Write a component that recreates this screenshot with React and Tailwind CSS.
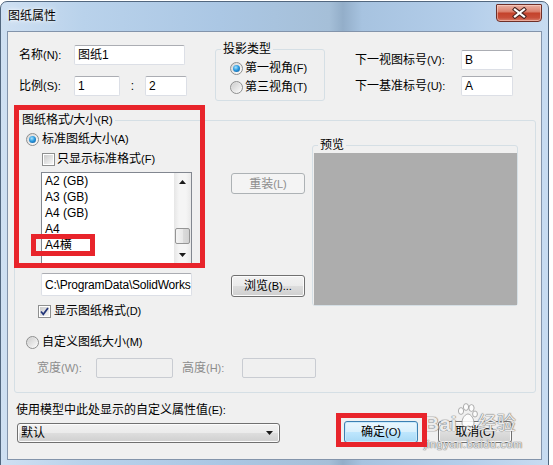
import React from 'react';

const M = ({ children }) => <span className="text-[11px]">{children}</span>;

function Radio({ on }) {
  return (
    <span className="flex items-center justify-center w-[13px] h-[13px] shrink-0 rounded-full border border-[#8e8f8f] bg-[linear-gradient(135deg,#d5d5d5,#fefefe)]">
      {on ? (
        <span className="w-[7px] h-[7px] rounded-full bg-[radial-gradient(circle_at_40%_35%,#a9e2fb_0%,#2a9ae0_45%,#0f4f8e_100%)]" />
      ) : (
        <span className="w-[9px] h-[9px] rounded-full bg-[linear-gradient(135deg,#cfcfcf,#f8f8f8)]" />
      )}
    </span>
  );
}

function Check({ on }) {
  return (
    <span className="flex items-center justify-center w-[13px] h-[13px] shrink-0 border border-[#8e8f8f] bg-white">
      <span className="relative flex items-center justify-center w-[9px] h-[9px] bg-[linear-gradient(135deg,#cbcbcb,#f7f7f7)]">
        {on && (
          <svg width="11" height="11" viewBox="0 0 11 11" className="absolute -left-[1px] -top-[1px]">
            <path d="M2 5.5 L4.3 8.3 L9 2" fill="none" stroke="#23367a" strokeWidth="1.7" />
          </svg>
        )}
      </span>
    </span>
  );
}

function Input({ className = '', children }) {
  return (
    <div className={`flex items-center shrink-0 bg-white border border-[#dcdfe6] border-t-[#abadb3] rounded-[2px] pl-[3px] overflow-hidden whitespace-nowrap ${className}`}>
      {children}
    </div>
  );
}

function Btn({ kind = 'normal', className = '', children }) {
  const styles = {
    normal:
      'border-[#707070] bg-[linear-gradient(180deg,#f2f2f2_0%,#ebebeb_48%,#dddddd_52%,#cfcfcf_100%)] shadow-[inset_0_0_0_1px_#fcfcfc] text-black',
    disabled: 'border-[#adb2b5] bg-[#f4f4f4] text-[#8d8d8d]',
    def: 'border-[#3c7fb1] bg-[linear-gradient(180deg,#eaf6fd_0%,#d9f0fc_48%,#bee6fd_52%,#a7d9f5_100%)] shadow-[inset_0_0_0_1px_#c8eafc] text-black',
  };
  return (
    <div className={`flex items-center justify-center w-[74px] shrink-0 rounded-[3px] border ${styles[kind]} ${className}`}>
      {children}
    </div>
  );
}

function Tri({ down }) {
  return (
    <svg width="7" height="4" viewBox="0 0 7 4">
      {down ? <polygon points="0,0 7,0 3.5,4" fill="#1a1a1a" /> : <polygon points="0,4 7,4 3.5,0" fill="#1a1a1a" />}
    </svg>
  );
}

export default function App() {
  const items = ['A2 (GB)', 'A3 (GB)', 'A4 (GB)', 'A4', 'A4横'];
  return (
    <div className="relative w-[553px] h-[465px] overflow-hidden bg-white text-[12px] leading-[14px] text-black font-[family-name:'Liberation_Sans','Noto_Sans_CJK_SC',sans-serif]">
      {/* window */}
      <div className="mt-[1px] w-[549px] h-[470px] rounded-t-[7px] border border-[#52677f] bg-[linear-gradient(90deg,#cfe0f2_0%,#b9d2eb_15%,#abc7e4_40%,#a5bfd8_60%,#93aec9_62.5%,#a7c3e0_66%,#b4ceea_85%,#c8dcf1_100%)] flex flex-col">
        {/* title bar */}
        <div className="h-[29px] flex items-start shrink-0">
          <div className="pl-[7px] pt-[6px] text-[12px] leading-[16px] [text-shadow:0_0_6px_#ffffff,0_0_3px_#ffffff]">图纸属性</div>
          <div className="ml-auto mr-[6px] mt-[2px] w-[46px] h-[18px] rounded-b-[4px] rounded-t-[1px] border border-[#6e2f28] bg-[linear-gradient(180deg,#eab0a3_0%,#dc8370_40%,#c4432c_52%,#c84f3a_80%,#d9826e_100%)] shadow-[inset_0_0_0_1px_rgba(255,220,210,0.5)] flex items-center justify-center">
            <svg width="15" height="12" viewBox="0 0 15 12">
              <path d="M3 2.5 L12 9.5 M12 2.5 L3 9.5" stroke="#4a2420" strokeWidth="4.2" strokeLinecap="square" fill="none" />
              <path d="M3 2.5 L12 9.5 M12 2.5 L3 9.5" stroke="#ffffff" strokeWidth="2.2" strokeLinecap="square" fill="none" />
            </svg>
          </div>
        </div>

        {/* client area */}
        <div className="ml-[6px] w-[535px] h-[429px] shrink-0 border border-[#8394ab] bg-[#f0f0f0] flex flex-col">
          {/* top section */}
          <div className="flex items-start">
            {/* name / scale */}
            <div className="ml-[11px] w-[168px] pt-[13px] flex flex-col">
              <div className="flex items-center h-[20px]">
                <span className="w-[55px] shrink-0">名称<M>(N):</M></span>
                <Input className="w-[111px] h-[20px]">图纸1</Input>
              </div>
              <div className="flex items-center h-[20px] mt-[11px]">
                <span className="w-[55px] shrink-0">比例<M>(S):</M></span>
                <Input className="w-[46px] h-[20px]">1</Input>
                <span className="w-[25px] text-center">:</span>
                <Input className="w-[42px] h-[20px]">2</Input>
              </div>
            </div>

            {/* projection type */}
            <fieldset className="ml-[28px] mt-[10px] w-[110px] p-0 m-0 border border-[#d5dfe5] rounded-[3px]">
              <legend className="ml-[5px] px-[2px] leading-[14px]">投影类型</legend>
              <div className="pl-[14px] pt-[4px] pb-[5px] flex flex-col gap-[3px]">
                <div className="flex items-center h-[16px] gap-[2px]">
                  <Radio on />
                  <span>第一视角<M>(F)</M></span>
                </div>
                <div className="flex items-center h-[16px] gap-[2px]">
                  <Radio />
                  <span>第三视角<M>(T)</M></span>
                </div>
              </div>
            </fieldset>

            {/* next labels */}
            <div className="ml-[30px] w-[158px] pt-[18px] flex flex-col">
              <div className="flex items-center h-[20px]">
                <span className="w-[106px] shrink-0">下一视图标号<M>(V):</M></span>
                <Input className="w-[52px] h-[20px]">B</Input>
              </div>
              <div className="flex items-center h-[20px] mt-[6px]">
                <span className="w-[106px] shrink-0">下一基准标号<M>(U):</M></span>
                <Input className="w-[52px] h-[20px]">A</Input>
              </div>
            </div>
          </div>

          {/* sheet format group */}
          <fieldset className="ml-[6px] mt-[12px] w-[522px] p-0 m-0 border border-[#d5dfe5] rounded-[3px]">
            <legend className="ml-[5px] px-[2px] leading-[14px]">图纸格式/大小<M>(R)</M></legend>
            <div className="flex flex-col pb-[14px]">
              <div className="flex items-start">
                {/* left column */}
                <div className="pl-[11px] w-[177px] shrink-0 flex flex-col">
                  <div className="flex items-center h-[16px] mt-[4px] gap-[3px]">
                    <Radio on />
                    <span>标准图纸大小<M>(A)</M></span>
                  </div>
                  <div className="flex items-center h-[16px] mt-[4px] ml-[16px] gap-[2px]">
                    <Check />
                    <span>只显示标准格式<M>(F)</M></span>
                  </div>
                  <div className="ml-[15px] mt-[5px] w-[151px] h-[92px] border border-[#828790] bg-white flex">
                    <div className="flex-1 flex flex-col pl-[3px] overflow-hidden">
                      {items.map((t) => (
                        <div key={t} className="h-[16px] leading-[16px] whitespace-nowrap">
                          {t}
                        </div>
                      ))}
                    </div>
                    <div className="w-[17px] shrink-0 flex flex-col bg-[linear-gradient(90deg,#e6e6e6,#f5f5f5_30%,#f5f5f5_70%,#e9e9e9)]">
                      <div className="h-[17px] flex items-center justify-center">
                        <Tri />
                      </div>
                      <div className="flex-1 flex flex-col items-center">
                        <div className="mt-auto mb-[2px] w-[15px] h-[16px] rounded-[2px] border border-[#959595] bg-[linear-gradient(90deg,#f4f4f4,#e9e9e9_50%,#dcdcdc_51%,#d2d2d2)]" />
                      </div>
                      <div className="h-[17px] flex items-center justify-center">
                        <Tri down />
                      </div>
                    </div>
                  </div>
                  <Input className="ml-[15px] mt-[9px] w-[151px] h-[23px] tracking-[-0.2px]">
                    {'C:\\ProgramData\\SolidWorks'}
                  </Input>
                  <div className="flex items-center h-[16px] mt-[7px] ml-[12px] gap-[3px]">
                    <Check on />
                    <span>显示图纸格式<M>(D)</M></span>
                  </div>
                  <div className="flex items-center h-[16px] mt-[15px] gap-[3px]">
                    <Radio />
                    <span>自定义图纸大小<M>(M)</M></span>
                  </div>
                </div>

                {/* middle buttons */}
                <div className="ml-[39px] w-[74px] shrink-0 flex flex-col">
                  <Btn kind="disabled" className="mt-[46px] h-[21px]">
                    重装<M>(L)</M>
                  </Btn>
                  <Btn className="mt-[81px] h-[22px]">
                    浏览<M>(B)...</M>
                  </Btn>
                </div>

                {/* preview */}
                <fieldset className="ml-[7px] mt-[11px] w-[206px] shrink-0 p-0 m-0 border border-[#d5dfe5] rounded-[3px]">
                  <legend className="ml-[5px] px-[2px] leading-[14px]">预览</legend>
                  <div className="ml-[1px] mt-[1px] w-[203px] h-[152px] bg-[#adadad]" />
                </fieldset>
              </div>

              {/* custom size */}
              <div className="flex items-center h-[20px] mt-[8px] pl-[22px] text-[#8d8d8d]">
                <span className="w-[59px] shrink-0">宽度<M>(W):</M></span>
                <div className="w-[77px] h-[20px] shrink-0 border border-[#c9ccd2] rounded-[2px] bg-[#f0f0f0]" />
                <span className="ml-[9px] w-[60px] shrink-0">高度<M>(H):</M></span>
                <div className="w-[74px] h-[20px] shrink-0 border border-[#c9ccd2] rounded-[2px] bg-[#f0f0f0]" />
              </div>
            </div>
          </fieldset>

          {/* bottom */}
          <div className="ml-[8px] mt-[10px] leading-[14px]">
            使用模型中此处显示的自定义属性值<M>(E):</M>
          </div>
          <div className="flex items-start mt-[4px]">
            <div className="ml-[9px] mt-[2px] w-[263px] h-[20px] shrink-0 rounded-[3px] border border-[#707070] bg-[linear-gradient(180deg,#f2f2f2_0%,#ebebeb_48%,#dddddd_52%,#cfcfcf_100%)] shadow-[inset_0_0_0_1px_#fcfcfc] flex items-center pl-[3px] pr-[6px]">
              <span>默认</span>
              <span className="ml-auto flex">
                <Tri down />
              </span>
            </div>
            <Btn kind="def" className="ml-[64px] h-[22px]">
              确定<M>(O)</M>
            </Btn>
            <Btn className="ml-[20px] h-[22px]">
              取消<M>(C)</M>
            </Btn>
          </div>
        </div>
      </div>

      {/* watermark */}
      <div className="absolute left-[424px] top-[403px] w-[100px] pointer-events-none text-white/85 [text-shadow:0_0_1px_#7a7a7a,0_0_1px_#7a7a7a,0_0_1px_#7a7a7a]">
        <div className="flex items-end h-[32px]">
          <span className="text-[21px] leading-[22px] font-bold">Bai</span>
          <svg width="22" height="26" viewBox="0 0 22 26" className="self-start -ml-[1px]" opacity="0.85">
            <g fill="#ffffff" stroke="#8a8a8a" strokeWidth="0.8">
              <ellipse cx="5" cy="8" rx="2.6" ry="3.4" />
              <ellipse cx="10" cy="4" rx="2.6" ry="3.4" />
              <ellipse cx="15.5" cy="5" rx="2.6" ry="3.4" />
              <ellipse cx="19" cy="11" rx="2.4" ry="3" />
              <path d="M6 20 C6 14 10 11 12 11 C15 11 18 16 18 20 C18 24 14 24 12 23 C10 24 6 24 6 20 Z" />
            </g>
          </svg>
          <span className="text-[19px] leading-[22px]">经验</span>
        </div>
        <div className="mt-[3px] text-[11px] leading-[12px] tracking-[0.6px]">jingyan.baidu.com</div>
      </div>

      {/* red annotation boxes */}
      <div className="absolute left-[14px] top-[105px] w-[191px] h-[163px] border-[5px] border-[#e8242b]" />
      <div className="absolute left-[31px] top-[234px] w-[64px] h-[22px] border-[5px] border-[#e8242b]" />
      <div className="absolute left-[336px] top-[413px] w-[91px] h-[34px] border-[5px] border-[#e8242b]" />
    </div>
  );
}
